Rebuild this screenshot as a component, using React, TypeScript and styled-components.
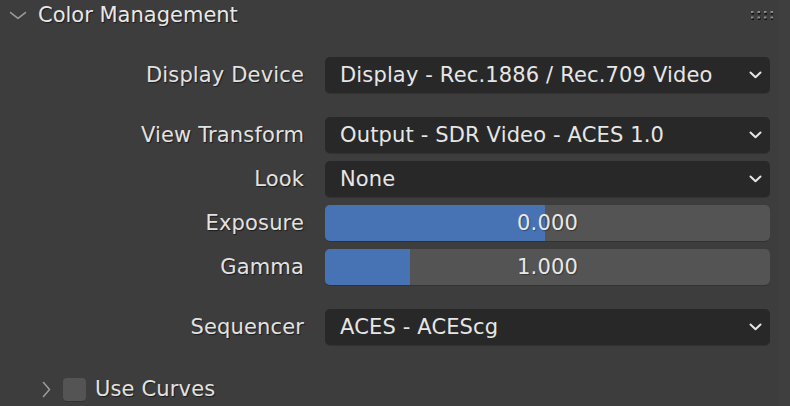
import React from "react";
import styled, { createGlobalStyle } from "styled-components";

const Global = createGlobalStyle`
  html, body { margin: 0; padding: 0; background: #3d3d3d; }
  body { width: 790px; height: 406px; overflow: hidden; }
  * { box-sizing: border-box; }
`;

const Panel = styled.div`
  position: relative;
  width: 790px;
  height: 406px;
  background: #3d3d3d;
  font-family: "DejaVu Sans", "Liberation Sans", sans-serif;
  font-size: 21px;
  letter-spacing: 0.15px;
  color: #e6e6e6;
  display: flex;
  flex-direction: column;
`;

const ScrollStrip = styled.div`
  position: absolute;
  top: 0;
  right: 0;
  width: 11px;
  height: 100%;
  background: #3f3f3f;
`;

const Header = styled.div`
  height: 30px;
  display: flex;
  align-items: center;
  padding-left: 9px;
  padding-right: 17px;
`;

const HeaderTitle = styled.span`
  margin-left: 11px;
  flex: 1;
  line-height: 1;
  letter-spacing: 0;
  text-shadow: 1px 1px 1px rgba(0, 0, 0, 0.55);
  color: #e8e8e8;
`;

const Body = styled.div`
  display: flex;
  flex-direction: column;
  padding-top: 27px;
`;

const Group = styled.div`
  display: flex;
  flex-direction: column;
  gap: 8px;
  margin-bottom: 24px;
`;

const Row = styled.div`
  display: grid;
  grid-template-columns: 304px 445px;
  column-gap: 21px;
  align-items: center;
  height: 36px;
`;

const Label = styled.div`
  text-align: right;
  white-space: nowrap;
  text-shadow: 1px 1px 1px rgba(0, 0, 0, 0.55);
  color: #e2e2e2;
`;

const Dropdown = styled.div`
  height: 36px;
  background: #282828;
  border-radius: 5px;
  box-shadow: 0 1px 0 rgba(0, 0, 0, 0.18);
  display: flex;
  align-items: center;
  padding-left: 15px;
  padding-right: 8px;
  color: #e6e6e6;
`;

const DropText = styled.span`
  flex: 1;
  white-space: nowrap;
`;

const Slider = styled.div`
  position: relative;
  height: 36px;
  background: #545454;
  border-radius: 5px;
  overflow: hidden;
  box-shadow: 0 1px 0 rgba(0, 0, 0, 0.18);
  display: flex;
  align-items: center;
  justify-content: center;
`;

const Fill = styled.div`
  position: absolute;
  left: 0;
  top: 0;
  bottom: 0;
  background: #4772b3;
`;

const SliderValue = styled.span`
  position: relative;
  color: #e8e8e8;
  text-shadow: 1px 1px 1px rgba(0, 0, 0, 0.35);
`;

const SubPanel = styled.div`
  display: flex;
  align-items: center;
  height: 24px;
  margin-top: 8px;
  padding-left: 42px;
`;

const CheckBox = styled.div`
  width: 23px;
  height: 23px;
  margin-left: 12px;
  background: #545454;
  border-radius: 4px;
  box-shadow: 0 1px 0 rgba(0, 0, 0, 0.18);
`;

const SubLabel = styled.span`
  margin-left: 9px;
  text-shadow: 1px 1px 1px rgba(0, 0, 0, 0.55);
  color: #e2e2e2;
`;

const ChevronDown = ({ w = 18, h = 9, color = "#9a9a9a", sw = 1.6 }) => (
  <svg width={w} height={h} viewBox={`0 0 ${w} ${h}`}>
    <polyline
      points={`${sw},${sw} ${w / 2},${h - sw} ${w - sw},${sw}`}
      fill="none"
      stroke={color}
      strokeWidth={sw}
      strokeLinecap="round"
      strokeLinejoin="round"
    />
  </svg>
);

const ChevronRight = () => (
  <svg width="9" height="17" viewBox="0 0 9 17">
    <polyline
      points="1.5,1.5 7.5,8.5 1.5,15.5"
      fill="none"
      stroke="#9a9a9a"
      strokeWidth="1.6"
      strokeLinecap="round"
      strokeLinejoin="round"
    />
  </svg>
);

const Grip = () => (
  <svg width="22" height="9" viewBox="0 0 22 9">
    {[0, 1].map((r) =>
      [0, 1, 2, 3].map((c) => (
        <g key={`${r}-${c}`}>
          <rect x={c * 6.5 + 0.5} y={r * 5.5 + 1} width="2.5" height="2.5" fill="#111" />
          <rect x={c * 6.5} y={r * 5.5} width="2.5" height="2" fill="#8a8a8a" />
        </g>
      ))
    )}
  </svg>
);

const DropArrow = () => (
  <svg width="13" height="8" viewBox="0 0 13 8">
    <polyline
      points="1.5,1.5 6.5,6.2 11.5,1.5"
      fill="none"
      stroke="#e6e6e6"
      strokeWidth="2"
      strokeLinecap="round"
      strokeLinejoin="round"
    />
  </svg>
);

const Select = ({ value }: { value: string }) => (
  <Dropdown>
    <DropText>{value}</DropText>
    <DropArrow />
  </Dropdown>
);

const NumSlider = ({ value, pct }: { value: string; pct: number }) => (
  <Slider>
    <Fill style={{ width: `${pct}%` }} />
    <SliderValue>{value}</SliderValue>
  </Slider>
);

export default function App() {
  return (
    <>
      <Global />
      <Panel>
        <ScrollStrip />
        <Header>
          <ChevronDown />
          <HeaderTitle>Color Management</HeaderTitle>
          <Grip />
        </Header>
        <Body>
          <Group>
            <Row>
              <Label>Display Device</Label>
              <Select value="Display - Rec.1886 / Rec.709 Video" />
            </Row>
          </Group>
          <Group>
            <Row>
              <Label>View Transform</Label>
              <Select value="Output - SDR Video - ACES 1.0" />
            </Row>
            <Row>
              <Label>Look</Label>
              <Select value="None" />
            </Row>
            <Row>
              <Label>Exposure</Label>
              <NumSlider value="0.000" pct={49.4} />
            </Row>
            <Row>
              <Label>Gamma</Label>
              <NumSlider value="1.000" pct={19.1} />
            </Row>
          </Group>
          <Group>
            <Row>
              <Label>Sequencer</Label>
              <Select value="ACES - ACEScg" />
            </Row>
          </Group>
          <SubPanel>
            <ChevronRight />
            <CheckBox />
            <SubLabel>Use Curves</SubLabel>
          </SubPanel>
        </Body>
      </Panel>
    </>
  );
}
